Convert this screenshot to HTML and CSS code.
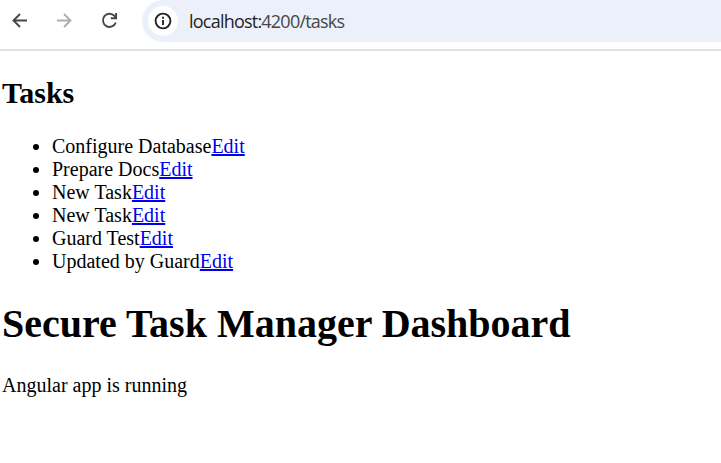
FILE: index.html
```html
<!DOCTYPE html>
<html lang="en">
<head>
<meta charset="utf-8">
<title>Tasks</title>
<link rel="stylesheet" href="styles.css">
</head>
<body>
<header class="toolbar">
  <nav class="nav">
    <svg class="icon" viewBox="0 0 20 20"><path d="M17 10.500H4M10 4 3.500 10.500 10 17"/></svg>
    <svg class="icon disabled" viewBox="0 0 20 20"><path d="M2 10.500h13M9 4l6.500 6.500L9 17"/></svg>
    <svg class="icon" viewBox="0 0 20 20"><path d="M15.800 12.500a6.600 6.600 0 1 1-1.300-6.600l1.500 1.900M16.100 3v5.200H10.800"/></svg>
  </nav>
  <div class="address">
    <span class="info"><svg class="icon dark" viewBox="0 0 20 20"><circle cx="10" cy="10" r="7.400"/><path d="M10 9v5M10 5.800v1.900"/></svg></span>
    <span class="url">localhost:<span class="path">4200/tasks</span></span>
  </div>
</header>
<main class="page">
  <h2>Tasks</h2>
  <ul>
    <li>Configure Database<a href="#">Edit</a></li>
    <li>Prepare Docs<a href="#">Edit</a></li>
    <li>New Task<a href="#">Edit</a></li>
    <li>New Task<a href="#">Edit</a></li>
    <li>Guard Test<a href="#">Edit</a></li>
    <li>Updated by Guard<a href="#">Edit</a></li>
  </ul>
  <h1>Secure Task Manager Dashboard</h1>
  <p>Angular app is running</p>
</main>
</body>
</html>
```
FILE: styles.css
```css
body { margin: 0; background: #fff; color: #000; overflow: hidden; }
.toolbar { display: flex; height: 49px; border-bottom: 2px solid #dfe1e5; box-sizing: content-box; }
.nav { display: flex; gap: 25px; padding: 10px 0 0 10px; width: 132px; }
.icon { width: 20px; height: 20px; flex: none; fill: none; stroke: #45474a; stroke-width: 1.9; }
.disabled { stroke: #adadad; }
.dark { stroke: #252629; }
.address { flex: 1; height: 42px; display: flex; align-items: center; background: #ebf0fa; border-radius: 21px 0 0 21px; }
.info { width: 30px; height: 30px; margin-left: 6px; border-radius: 50%; background: #fff; display: grid; place-items: center; }
.url { margin-left: 11px; font: 18px "Open Sans", sans-serif; letter-spacing: -0.78px; color: #1f1f1f; }
.path { color: #474747; }
.page { padding-left: 2px; font: 20px/23px "Liberation Serif", serif; }
h2 { margin: 24px 0 25px; font-size: 30px; line-height: 35px; }
ul { margin: 0; padding-left: 50px; }
a { color: #0000ee; text-decoration-thickness: 2px; text-underline-offset: 1px; text-decoration-skip-ink: none; }
h1 { margin: 28px 0 27px; font-size: 40px; line-height: 46px; }
p { margin: 0; }
```
